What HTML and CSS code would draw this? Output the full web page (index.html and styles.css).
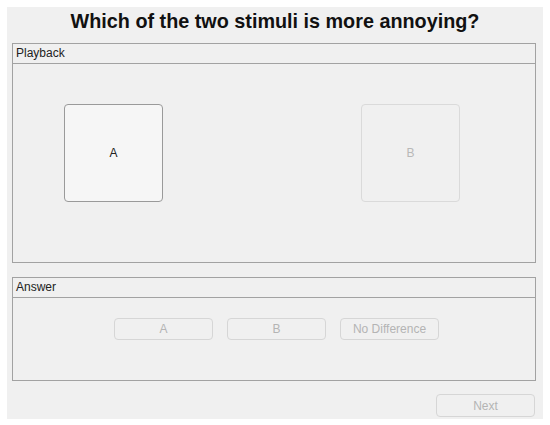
FILE: index.html
```html
<!DOCTYPE html>
<html>
<head>
<meta charset="utf-8">
<link rel="stylesheet" href="styles.css">
</head>
<body>
<div class="window">
  <h1 class="title">Which of the two stimuli is more annoying?</h1>
  <section class="panel playback">
    <div class="panel-head">Playback</div>
    <div class="playback-body">
      <button class="stim active">A</button>
      <button class="stim disabled">B</button>
    </div>
  </section>
  <section class="panel answer">
    <div class="panel-head">Answer</div>
    <div class="answer-body">
      <button class="ans">A</button>
      <button class="ans">B</button>
      <button class="ans">No Difference</button>
    </div>
  </section>
  <div class="footer">
    <button class="next">Next</button>
  </div>
</div>
</body>
</html>
```
FILE: styles.css
```css
html, body {
  margin: 0;
  padding: 0;
  background: #ffffff;
}
body {
  font-family: "Liberation Sans", Arial, sans-serif;
  width: 550px;
  height: 425px;
  overflow: hidden;
}
.window {
  margin: 7px 0 0 7px;
  width: 536px;
  height: 412px;
  background: #f0f0f0;
  display: flex;
  flex-direction: column;
}
.title {
  margin: 0;
  height: 36px;
  padding-top: 2px;
  box-sizing: border-box;
  font-size: 19.8px;
  font-weight: bold;
  color: #111;
  text-align: center;
  line-height: 24px;
}
.panel {
  margin-left: 5px;
  width: 524px;
  border: 1px solid #a2a2a2;
  box-sizing: border-box;
}
.panel-head {
  height: 19px;
  border-bottom: 1px solid #a2a2a2;
  font-size: 12px;
  line-height: 18px;
  padding-left: 3px;
  color: #222;
}
.playback {
  height: 220px;
}
.playback-body {
  display: flex;
  padding: 40px 0 0 51px;
  gap: 198px;
}
.stim {
  width: 99px;
  height: 98px;
  border-radius: 4px;
  font-family: "Liberation Sans", Arial, sans-serif;
  font-size: 12px;
  padding: 0;
}
.stim.active {
  border: 1px solid #9a9a9a;
  background: #f6f6f6;
  color: #222;
}
.stim.disabled {
  border: 1px solid #dadada;
  background: #f0f0f0;
  color: #b8b8b8;
}
.answer {
  margin-top: 14px;
  height: 104px;
}
.answer-body {
  display: flex;
  padding: 20px 0 0 101px;
  gap: 14px;
}
.ans {
  width: 99px;
  height: 22px;
  border: 1px solid #d6d6d6;
  border-radius: 4px;
  background: #f0f0f0;
  color: #b4b4b4;
  font-family: "Liberation Sans", Arial, sans-serif;
  font-size: 12px;
  padding: 0;
}
.footer {
  display: flex;
  justify-content: flex-end;
  padding: 13px 8px 0 0;
}
.next {
  width: 99px;
  height: 23px;
  border: 1px solid #d6d6d6;
  border-radius: 4px;
  background: #f0f0f0;
  color: #b4b4b4;
  font-family: "Liberation Sans", Arial, sans-serif;
  font-size: 12px;
  padding: 0;
}
```
